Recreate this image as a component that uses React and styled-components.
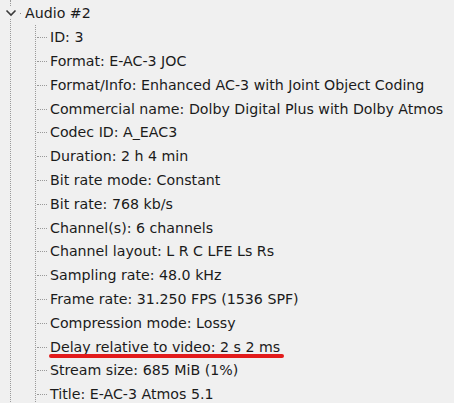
import React from 'react';
import styled, { createGlobalStyle } from 'styled-components';

const ROW = 23.8;

const fields = [
  ['ID', '3'],
  ['Format', 'E-AC-3 JOC'],
  ['Format/Info', 'Enhanced AC-3 with Joint Object Coding'],
  ['Commercial name', 'Dolby Digital Plus with Dolby Atmos'],
  ['Codec ID', 'A_EAC3'],
  ['Duration', '2 h 4 min'],
  ['Bit rate mode', 'Constant'],
  ['Bit rate', '768 kb/s'],
  ['Channel(s)', '6 channels'],
  ['Channel layout', 'L R C LFE Ls Rs'],
  ['Sampling rate', '48.0 kHz'],
  ['Frame rate', '31.250 FPS (1536 SPF)'],
  ['Compression mode', 'Lossy'],
  ['Delay relative to video', '2 s 2 ms', true],
  ['Stream size', '685 MiB (1%)'],
  ['Title', 'E-AC-3 Atmos 5.1'],
];

function Chevron() {
  return (
    <svg width="12" height="8" viewBox="0 0 12 8">
      <path d="M1.5 1.5 L6 6 L10.5 1.5" fill="none" stroke="#3a3a3a" strokeWidth="1.6" />
    </svg>
  );
}

function App() {
  return (
    <>
      <GlobalStyle />
      <Tree>
        <Branch>
          <NodeHeader>
            <Toggle>
              <Chevron />
            </Toggle>
            <Dot />
            <Label>Audio #2</Label>
          </NodeHeader>
          <Children>
            {fields.map(([name, value, marked]) => (
              <Leaf key={name}>
                <Connector />
                <Label $marked={marked}>
                  {name}: {value}
                </Label>
              </Leaf>
            ))}
          </Children>
        </Branch>
      </Tree>
    </>
  );
}

const GlobalStyle = createGlobalStyle`
  html, body {
    margin: 0;
    background: #f0f0f0;
    overflow: hidden;
  }
  body {
    font-family: "DejaVu Sans", sans-serif;
    font-size: 14.2px;
    color: #1b1b1b;
  }
`;

const Tree = styled.div`
  height: 403px;
  padding-left: 10px;
  box-sizing: border-box;
`;

const Branch = styled.div`
  border-left: 1px dotted #9a9a9a;
  min-height: 100%;
  padding-top: 1.5px;
`;

const NodeHeader = styled.div`
  display: flex;
  align-items: center;
  height: ${ROW}px;
`;

const Toggle = styled.span`
  display: flex;
  align-items: center;
  justify-content: center;
  width: 14px;
  height: 12px;
  margin-left: -7px;
  background: #f0f0f0;
`;

const Dot = styled.span`
  width: 1px;
  height: 1px;
  background: #8a8a8a;
  margin: 1px 4px 0 2px;
`;

const Children = styled.div`
  margin-left: 24px;
  border-left: 1px dotted #9a9a9a;
`;

const Leaf = styled.div`
  display: flex;
  align-items: center;
  height: ${ROW}px;
`;

const Connector = styled.span`
  width: 10px;
  border-top: 1px dotted #9a9a9a;
  margin: 1px 3px 0 1px;
`;

const Label = styled.span`
  position: relative;
  white-space: nowrap;
  line-height: 18px;

  &::after {
    content: '';
    display: ${(p) => (p.$marked ? 'block' : 'none')};
    position: absolute;
    left: -1px;
    right: -4px;
    bottom: -2px;
    height: 4px;
    border-radius: 2px;
    background: #e21b1b;
  }
`;

export default App;
